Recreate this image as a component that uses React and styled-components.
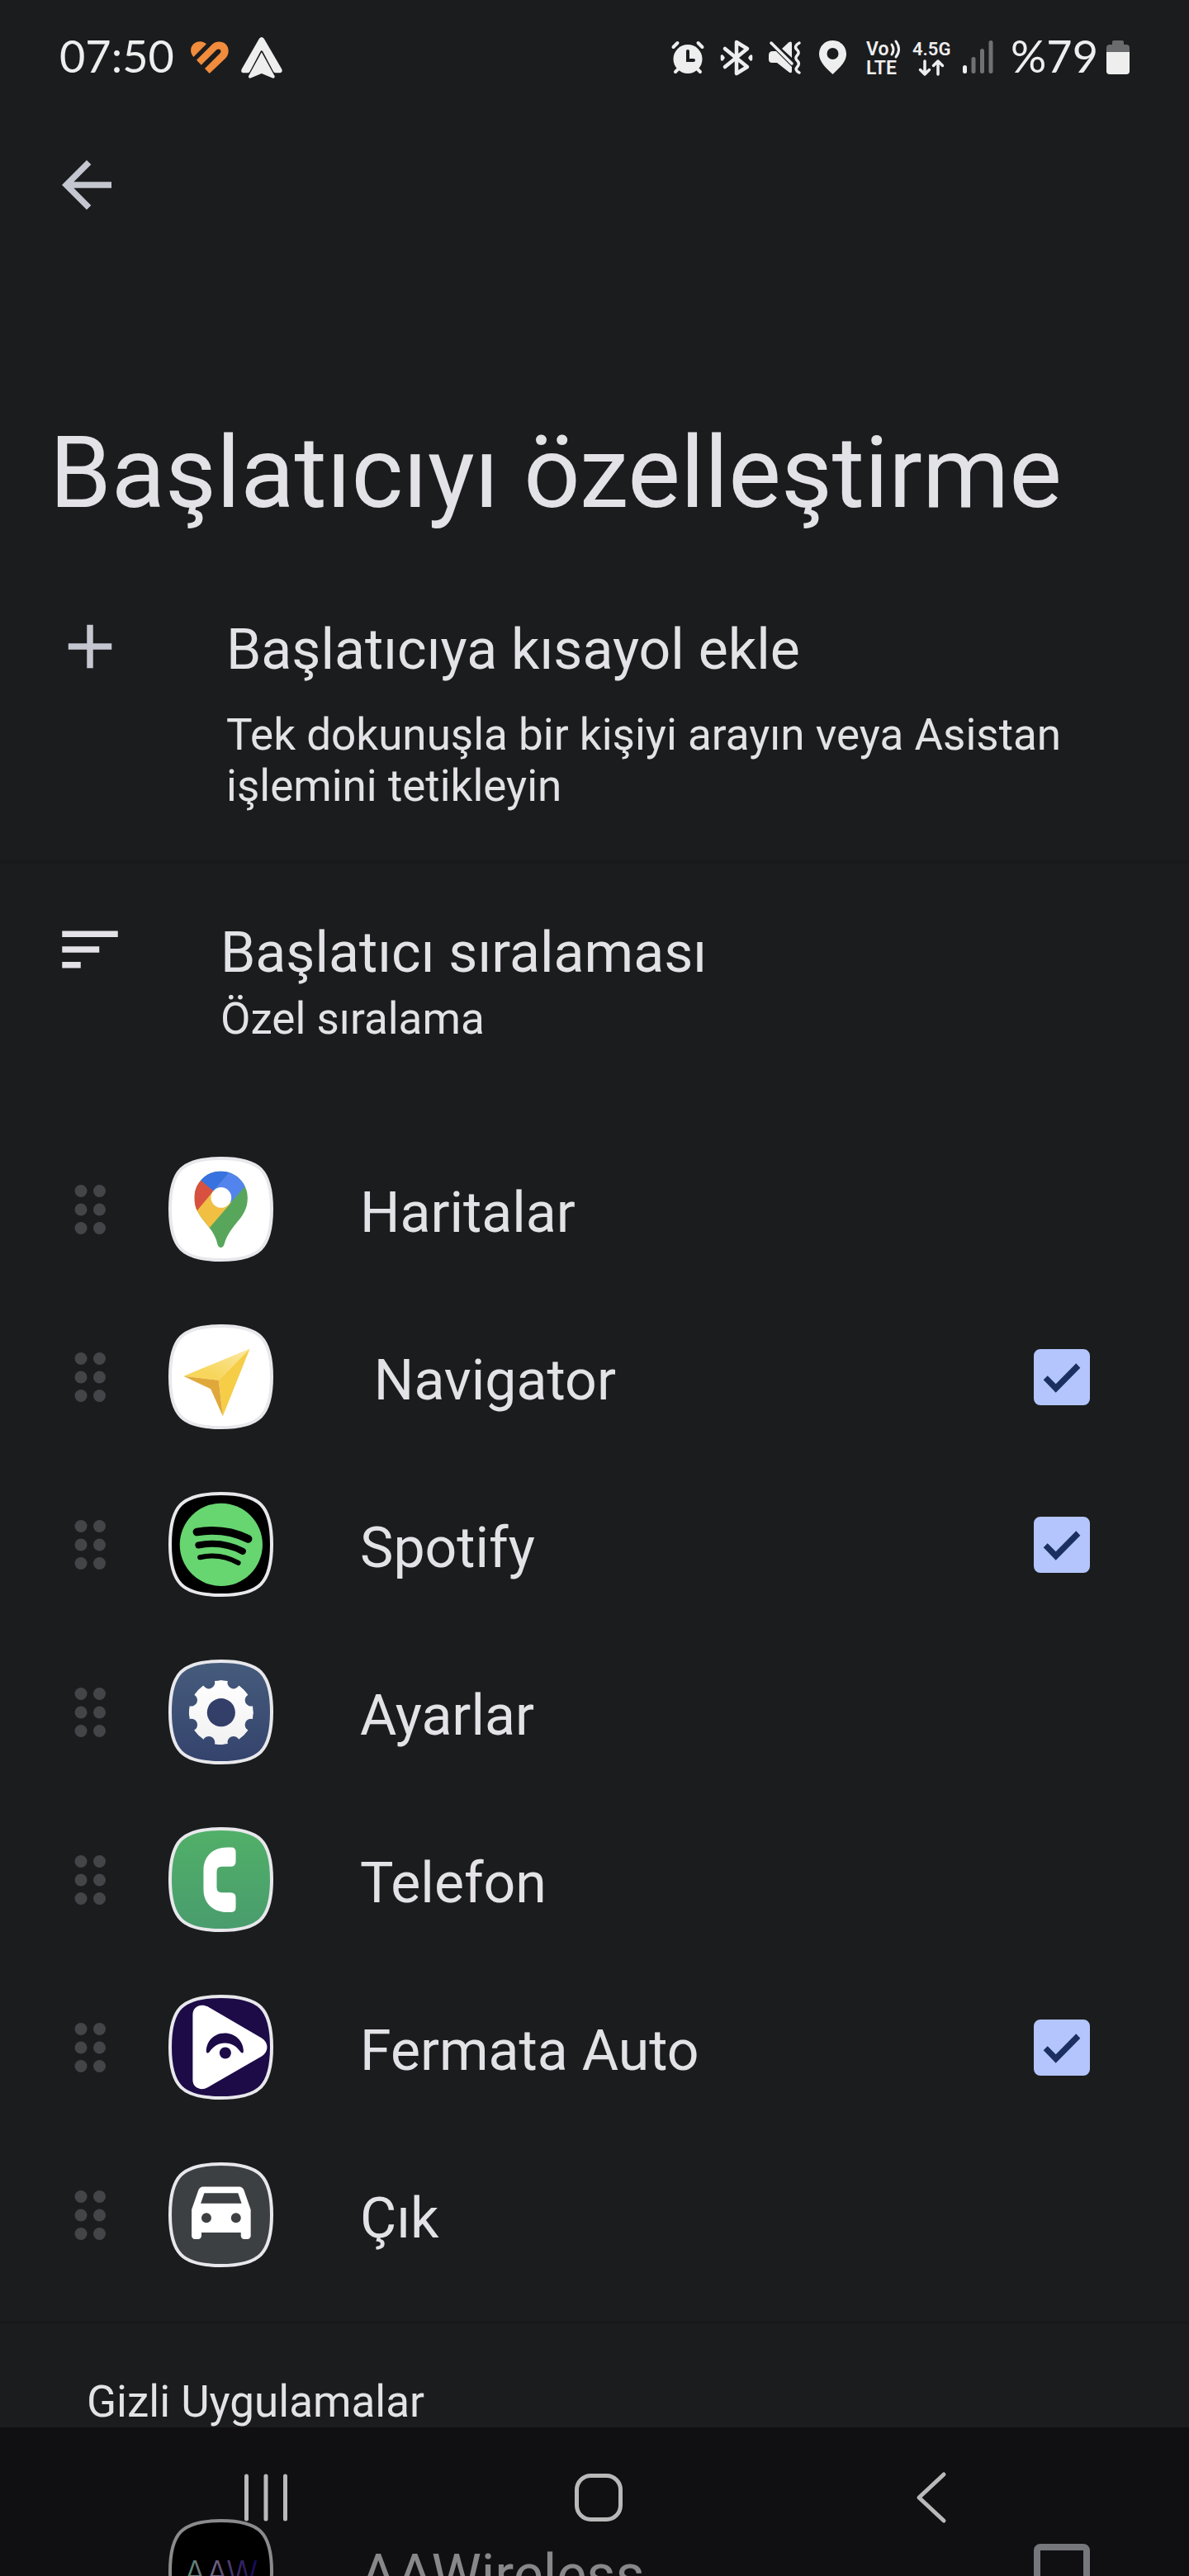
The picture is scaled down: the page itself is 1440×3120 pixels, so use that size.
import { useState } from "react";
import styled, { createGlobalStyle } from "styled-components";

const APPS = [
    { id: "maps", name: "Haritalar", Icon: MapsIcon },
    { id: "navigator", name: " Navigator", Icon: NavigatorIcon, optional: true },
    { id: "spotify", name: "Spotify", Icon: SpotifyIcon, optional: true },
    { id: "settings", name: "Ayarlar", Icon: SettingsIcon },
    { id: "phone", name: "Telefon", Icon: PhoneIcon },
    { id: "fermata", name: "Fermata Auto", Icon: FermataIcon, optional: true },
    { id: "exit", name: "Çık", Icon: CarIcon },
];

const HIDDEN_APPS = [
    { id: "aawireless", name: "AAWireless", Icon: AawIcon, optional: true },
];

const SQUIRCLE = "M190 6C330 6 374 50 374 190C374 330 330 374 190 374C50 374 6 330 6 190C6 50 50 6 190 6Z";

// every launcher icon sits in the same rounded shape with a light rim
function Badge({ fill, children }) {
    return (
        <BadgeSvg viewBox="0 0 380 380" aria-hidden="true">
            <path d={SQUIRCLE} fill={fill} />
            {children}
            <path d={SQUIRCLE} fill="none" stroke="#e8e8ec" strokeWidth="12" />
        </BadgeSvg>
    );
}

function MapsIcon() {
    return (
        <Badge fill="#fff">
            <clipPath id="pin">
                <path d="M190 52C243 52 287 95 287 149C287 225 222 243 202 318C199 327 195 329 190 329C184 329 181 326 178 318C163 245 94 225 94 149C94 95 137 52 190 52Z" />
            </clipPath>
            <g clipPath="url(#pin)">
                <path d="M60 30H320V340H60Z" fill="#58a65c" />
                <path d="M149 257L60 360V195L163 124L230 163Z" fill="#f1bf42" />
                <path d="M163 124L235 37L304 77L226 166L191 148Z" fill="#5383ec" />
                <path d="M163 124L118 87L100 40H233Z" fill="#3871e0" />
                <path d="M163 124L118 87L60 40V248Z" fill="#d85140" />
            </g>
            <circle cx="191" cy="148" r="37" fill="#fff" />
        </Badge>
    );
}

function NavigatorIcon() {
    return (
        <Badge fill="#fff">
            <linearGradient id="wing" x1="0" y1="1" x2="1" y2="0">
                <stop offset="0.3" stopColor="#f7d65b" />
                <stop offset="1" stopColor="#fae9a4" />
            </linearGradient>
            <path d="M295 88L55 188L182 203Z" fill="url(#wing)" />
            <path d="M295 88L182 203L197 333Z" fill="#f6cd46" />
            <path d="M55 188L182 203L197 333L153 234Z" fill="#e0a83a" />
        </Badge>
    );
}

function SpotifyIcon() {
    return (
        <Badge fill="#000">
            <circle cx="191" cy="191" r="150" fill="#67d570" />
            <g fill="none" stroke="#000" strokeLinecap="round">
                <path d="M103 145Q203 128 289 170" strokeWidth="29" />
                <path d="M109 193Q195 176 269 215" strokeWidth="24" />
                <path d="M114 237Q188 220 253 257" strokeWidth="18" />
            </g>
        </Badge>
    );
}

function SettingsIcon() {
    const notches = [0, 1, 2, 3, 4, 5, 6, 7].map((i) => 22.5 + i * 45);
    return (
        <Badge fill="url(#settingsBg)">
            <linearGradient id="settingsBg" x1="0" y1="0" x2="0" y2="1">
                <stop offset="0" stopColor="#465c7c" />
                <stop offset="1" stopColor="#34436d" />
            </linearGradient>
            <linearGradient id="gearFill" x1="0" y1="0" x2="0" y2="1">
                <stop offset="0" stopColor="#fff" />
                <stop offset="1" stopColor="#f1f1f2" />
            </linearGradient>
            <mask id="gear">
                <circle cx="191" cy="192" r="117" fill="#fff" />
                {notches.map((a) => (
                    <circle key={a} cx="308" cy="192" r="22" fill="#000" transform={`rotate(${a} 191 192)`} />
                ))}
            </mask>
            <circle cx="191" cy="192" r="117" fill="url(#gearFill)" mask="url(#gear)" />
            <circle cx="191" cy="192" r="51" fill="#333f69" />
        </Badge>
    );
}

function PhoneIcon() {
    return (
        <Badge fill="url(#phoneBg)">
            <linearGradient id="phoneBg" x1="0" y1="0" x2="0" y2="1">
                <stop offset="0" stopColor="#51b068" />
                <stop offset="1" stopColor="#499c6d" />
            </linearGradient>
            <path
                fill="#fff"
                d="M213 73H228Q244 73 244 90V124Q244 143 225 143H193Q175 143 175 162V218Q175 237 193 237H225Q244 237 244 256V291Q244 308 228 308H213C160 308 127 275 127 225V156C127 106 160 73 213 73Z"
            />
        </Badge>
    );
}

function FermataIcon() {
    return (
        <Badge fill="#1d0b48">
            <path d="M88 72C88 42 118 30 142 43L338 157C364 174 364 206 338 223L142 336C118 350 88 337 88 310Z" fill="#fff" />
            <g fill="#1d0b48">
                <path d="M137 205C137 168 165 139 204 139C243 139 272 168 272 205C272 212 266 213 262 208C248 188 230 175 204 175C180 175 162 188 148 208C144 213 137 212 137 205Z" />
                <circle cx="206" cy="211" r="21" />
            </g>
        </Badge>
    );
}

function CarIcon() {
    return (
        <Badge fill="#3d4043">
            <g transform="translate(48.3 28.5) scale(11.9)">
                <path
                    fill="#fff"
                    d="M18.92 6.01C18.72 5.42 18.16 5 17.5 5h-11c-.66 0-1.21.42-1.42 1.01L3 12v8c0 .55.45 1 1 1h1c.55 0 1-.45 1-1v-1h12v1c0 .55.45 1 1 1h1c.55 0 1-.45 1-1v-8l-2.08-5.99z"
                />
                <path d="M6.85 7h10.29l1.08 3.11H5.77L6.85 7z" fill="#3d4043" />
                <circle cx="7.5" cy="14.5" r="1.5" fill="#3d4043" />
                <circle cx="16.5" cy="14.5" r="1.5" fill="#3d4043" />
            </g>
        </Badge>
    );
}

function AawIcon() {
    return (
        <Badge fill="#000">
            <linearGradient id="aaw" x1="0" y1="0" x2="1" y2="0">
                <stop offset="0" stopColor="#9af0be" />
                <stop offset="0.4" stopColor="#c3a9e0" />
                <stop offset="0.7" stopColor="#6c4cb4" />
                <stop offset="1" stopColor="#220a9a" />
            </linearGradient>
            <text x="190" y="237" textAnchor="middle" fontFamily="Inter, sans-serif" fontSize="118" fontWeight="300" fill="url(#aaw)">
                AAW
            </text>
        </Badge>
    );
}

function HandleIcon() {
    const dots = [];
    for (const cy of [22.5, 45, 67.5]) {
        for (const cx of [34, 56.5]) {
            dots.push(<circle key={`${cx}-${cy}`} cx={cx} cy={cy} r="7.5" />);
        }
    }
    return (
        <LineIcon viewBox="0 0 90 90" fill="#444548" aria-hidden="true">
            {dots}
        </LineIcon>
    );
}

function AppRow({ app, sortable, checked, onToggle }) {
    const { id, name, Icon, optional } = app;
    return (
        <Row>
            <HandleSlot>{sortable && <HandleIcon />}</HandleSlot>
            <Icon />
            <RowName as={optional ? "label" : "span"} htmlFor={optional ? id : undefined}>
                {name}
            </RowName>
            {optional && (
                <CheckSlot>
                    <CheckInput id={id} type="checkbox" checked={checked} onChange={() => onToggle(id)} />
                    {checked && (
                        <CheckMark viewBox="0 0 68 68" aria-hidden="true">
                            <path d="M11.7 37.3L16.7 32.3L26.7 42.3L51.3 17.3L56.3 22.7L26.7 52.7Z" fill="#1b2f60" />
                        </CheckMark>
                    )}
                </CheckSlot>
            )}
        </Row>
    );
}

function StatusBar() {
    return (
        <Status>
            <StatusText>07:50</StatusText>
            <Notifications>
                <svg width="46" height="40" viewBox="0 0 138 120" fill="#f08c3c" aria-hidden="true">
                    <path d="M57 10L10 57C-3 43 -3 22 10 10C23 -2 43 -3 57 10Z" />
                    <path d="M21 68L77 12C98 -8 137 2 137 35C137 46 133 55 125 63L68 117L51 99L105 45C112 38 110 30 104 29C98 28 94 31 91 34L38 86Z" />
                </svg>
                <svg width="50" height="50" viewBox="0 0 147 148" fill="#eee" aria-hidden="true">
                    <path d="M73 0C77 0 80 3 82 6L145 114C149 122 145 128 138 128L122 128C119 128 117 126 115 123L77 51Q73 45 69 51L31 123C29 126 27 128 24 128L8 128C1 128 -2 122 2 114L64 6C66 3 69 0 73 0Z" />
                    <path d="M73 54L120 140Q121 148 114 147L73 130L32 147Q25 148 26 140Z" stroke="#1b1c1e" strokeWidth="5" paintOrder="stroke" />
                </svg>
            </Notifications>
            <SystemIcons>
                <svg width="40" height="44" viewBox="0 0 40 44" aria-hidden="true">
                    <g stroke="#eee" strokeWidth="4" strokeLinecap="round" fill="none">
                        <path d="M2.5 9L7.5 4M37.5 9L32.5 4M5 39L10 34M35 39L30 34" />
                    </g>
                    <circle cx="20" cy="23.5" r="17.5" fill="#eee" />
                    <path d="M20 14V25H27" fill="none" stroke="#1b1c1e" strokeWidth="4" strokeLinecap="round" />
                </svg>
                <svg width="40" height="44" viewBox="0 0 40 44" fill="none" stroke="#eee" strokeWidth="4.5" strokeLinejoin="round" strokeLinecap="round" aria-hidden="true">
                    <path d="M6 11L33 33L20 41V3L33 11L6 33" />
                    <path d="M2.5 20V24L4 22ZM37.5 20V24L36 22Z" strokeWidth="3.5" />
                </svg>
                <svg width="40" height="44" viewBox="0 0 40 44" fill="#eee" aria-hidden="true">
                    <path d="M0 19Q0 14 5 14H9L28 33V38Q28 42 24 39L10 28H4Q0 28 0 24Z" />
                    <path d="M16 11L24 3.5Q28 1 28 5V22Z" />
                    <g fill="none" stroke="#eee" strokeWidth="3.5" strokeLinecap="round">
                        <path d="M3 4L28 29" />
                        <path d="M37 4Q30 8 34 12Q38 15.500 34.500 19Q31 22.500 35 26Q38 29.500 34.500 33Q31 37 37 40" />
                    </g>
                </svg>
                <svg width="40" height="44" viewBox="0 0 40 44" fill="#eee" aria-hidden="true">
                    <path fillRule="evenodd" d="M18.5 1C28.5 1 35 8.5 35 17.5C35 27 26 35 18.5 42C11 35 2 27 2 17.5C2 8.5 8.5 1 18.5 1ZM18.5 10A7 7 0 1 0 18.5 24A7 7 0 1 0 18.5 10Z" />
                </svg>
            </SystemIcons>
            <NetworkIcons>
                <svg width="42" height="44" viewBox="0 0 42 44" fill="#eee" aria-hidden="true">
                    <text x="0" y="19" fontSize="23" fontWeight="600">Vo</text>
                    <text x="0" y="42" fontSize="23" fontWeight="600">LTE</text>
                    <path d="M31 6Q35 12 31 18M36 2Q43 12 36 21" fill="none" stroke="#eee" strokeWidth="3" strokeLinecap="round" />
                </svg>
                <svg width="46" height="44" viewBox="0 0 46 44" fill="#eee" aria-hidden="true">
                    <text x="0" y="19" fontSize="22" fontWeight="600">4.5G</text>
                    <path d="M15 26V42M9.5 36.5L15 42L20.5 36.5M31 42V26M25.5 31.5L31 26L36.5 31.5" fill="none" stroke="#eee" strokeWidth="3.5" strokeLinecap="round" strokeLinejoin="round" />
                </svg>
                <svg width="38" height="44" viewBox="0 0 38 44" fill="#707173" aria-hidden="true">
                    <rect x="1" y="31" width="5" height="10" rx="2.5" fill="#eee" />
                    <rect x="11.5" y="21" width="5" height="20" rx="2.5" />
                    <rect x="22" y="11" width="5" height="30" rx="2.5" />
                    <rect x="32.5" y="1" width="5" height="40" rx="2.5" />
                </svg>
            </NetworkIcons>
            <StatusText>%79</StatusText>
            <svg width="28" height="44" viewBox="0 0 28 44" aria-hidden="true">
                <path d="M7 6V3Q7 1 9 1H19Q21 1 21 3V6H24Q28 6 28 10V15H0V10Q0 6 4 6Z" fill="#6a6b6d" />
                <path d="M0 15H28V38Q28 42 24 42H4Q0 42 0 38Z" fill="#eee" />
            </svg>
        </Status>
    );
}

function App() {
    const [enabled, setEnabled] = useState({ navigator: true, spotify: true, fermata: true });

    const toggle = (id) => {
        setEnabled({ ...enabled, [id]: !enabled[id] });
    };

    return (
        <Screen>
            <GlobalStyle />
            <StatusBar />
            <Toolbar>
                <IconButton aria-label="Geri">
                    <LineIcon viewBox="0 0 24 24" fill="#c4c6d0" aria-hidden="true">
                        <path d="M20 11H7.83l5.59-5.59L12 4l-8 8 8 8 1.41-1.41L7.83 13H20v-2z" />
                    </LineIcon>
                </IconButton>
            </Toolbar>
            <Title>Başlatıcıyı özelleştirme</Title>

            <Action $gap={120}>
                <LineIcon viewBox="0 0 24 24" fill="#c4c6d0" aria-hidden="true">
                    <path d="M19 13h-6v6h-2v-6H5v-2h6V5h2v6h6v2z" />
                </LineIcon>
                <ActionText $gap={32}>
                    <ItemTitle>Başlatıcıya kısayol ekle</ItemTitle>
                    <ItemNote>Tek dokunuşla bir kişiyi arayın veya Asistan işlemini tetikleyin</ItemNote>
                </ActionText>
            </Action>
            <Divider $top={59} $bottom={59} />
            <Action $gap={113}>
                <LineIcon viewBox="0 0 24 24" fill="#e3e2e6" aria-hidden="true">
                    <path d="M3 18h6v-2H3v2zM3 6v2h18V6H3zm0 7h12v-2H3v2z" />
                </LineIcon>
                <ActionText $gap={9}>
                    <ItemTitle>Başlatıcı sıralaması</ItemTitle>
                    <ItemNote>Özel sıralama</ItemNote>
                </ActionText>
            </Action>

            <AppList>
                {APPS.map((app) => (
                    <AppRow key={app.id} app={app} sortable checked={!!enabled[app.id]} onToggle={toggle} />
                ))}
            </AppList>
            <Divider $top={27} $bottom={63} />
            <SectionName>Gizli Uygulamalar</SectionName>
            <HiddenList>
                {HIDDEN_APPS.map((app) => (
                    <AppRow key={app.id} app={app} checked={!!enabled[app.id]} onToggle={toggle} />
                ))}
            </HiddenList>

            <NavBar>
                <NavButton aria-label="Son uygulamalar">
                    <NavIcon viewBox="0 0 62 62" aria-hidden="true">
                        <path d="M7.5 5V57M31 5V57M54.5 5V57" />
                    </NavIcon>
                </NavButton>
                <NavButton aria-label="Ana ekran">
                    <NavIcon viewBox="0 0 62 62" aria-hidden="true">
                        <rect x="4.5" y="4.5" width="53" height="53" rx="17" />
                    </NavIcon>
                </NavButton>
                <NavButton aria-label="Geri">
                    <NavIcon viewBox="0 0 62 62" aria-hidden="true">
                        <path d="M46 3L16 31L46 59" />
                    </NavIcon>
                </NavButton>
            </NavBar>
        </Screen>
    );
}

const GlobalStyle = createGlobalStyle`
    body {
        margin: 0;
        background: #1b1c1e;
        font-family: Roboto, "Noto Sans", sans-serif;
        color: #e3e2e6;
    }

    svg {
        flex: none;
        display: block;
        overflow: visible;
    }
`;

const Screen = styled.div`
    box-sizing: border-box;
    height: 100vh;
    overflow-y: auto;
    scrollbar-width: none;
`;

const Status = styled.header`
    display: flex;
    align-items: center;
    height: 140px;
    padding: 0 72px;
`;

const StatusText = styled.span`
    padding-bottom: 4px;
    font-family: Lato, Roboto, sans-serif;
    font-size: 54px;
    line-height: 64px;
    color: #eee;
`;

const Notifications = styled.div`
    display: flex;
    align-items: center;
    gap: 15px;
    flex: 1;
    padding-left: 20px;
`;

const SystemIcons = styled.div`
    display: flex;
    gap: 19px;
    padding-right: 19px;
`;

const NetworkIcons = styled.div`
    display: flex;
    gap: 14px;
    padding-right: 21px;

    & + ${StatusText} {
        padding-right: 10px;
    }
`;

const Toolbar = styled.nav`
    display: flex;
    align-items: center;
    height: 168px;
    padding: 0 60px;
`;

const IconButton = styled.button`
    padding: 0;
    border: none;
    background: none;
    cursor: pointer;
`;

const LineIcon = styled.svg`
    width: 90px;
    height: 90px;
`;

const BadgeSvg = styled.svg`
    width: 127px;
    height: 127px;
`;

const Title = styled.h1`
    margin: 0;
    padding: 195px 60px 95px;
    font-size: 120px;
    line-height: 140px;
    font-weight: 400;
`;

const Action = styled.section`
    display: flex;
    align-items: flex-start;
    gap: ${(props) => props.$gap}px;
    padding: 0 64px;
`;

const ActionText = styled.div`
    display: flex;
    flex-direction: column;
    gap: ${(props) => props.$gap}px;
    padding-top: 9px;
`;

const ItemTitle = styled.h2`
    margin: 0;
    font-size: 68px;
    line-height: 80px;
    font-weight: 400;
`;

const ItemNote = styled.p`
    margin: 0;
    font-size: 53px;
    line-height: 62px;
`;

const Divider = styled.hr`
    height: 4px;
    margin: ${(props) => props.$top}px 0 ${(props) => props.$bottom}px;
    border: none;
    background: #18191b;
`;

const AppList = styled.ul`
    margin: 0;
    padding: 98px 0 0;
    list-style: none;
`;

const HiddenList = styled(AppList)`
    padding-top: 73px;
`;

const Row = styled.li`
    display: flex;
    align-items: center;
    height: 203px;
    padding: 0 120px 0 64px;
`;

const HandleSlot = styled.span`
    flex: none;
    width: 140px;
`;

const RowName = styled.span`
    flex: 1;
    padding: 8px 0 0 105px;
    font-size: 68px;
    line-height: 80px;
    white-space: pre;
`;

const CheckSlot = styled.span`
    display: grid;
    width: 68px;
    height: 68px;

    & > * {
        grid-area: 1 / 1;
    }
`;

const CheckInput = styled.input`
    appearance: none;
    box-sizing: border-box;
    width: 68px;
    height: 68px;
    margin: 0;
    border: 8px solid #c4c6d0;
    border-radius: 8px;
    cursor: pointer;

    &:checked {
        border-color: #b3c5fc;
        background: #b3c5fc;
    }
`;

const CheckMark = styled.svg`
    width: 68px;
    height: 68px;
    pointer-events: none;
`;

const SectionName = styled.h3`
    margin: 0;
    padding: 0 105px;
    font-size: 53px;
    line-height: 62px;
    font-weight: 400;
`;

const NavBar = styled.nav`
    position: fixed;
    left: 0;
    right: 0;
    bottom: 0;
    box-sizing: border-box;
    display: flex;
    align-items: center;
    height: 180px;
    padding: 0 110px 10px 120px;
    background: rgba(0, 0, 0, 0.4);
`;

const NavButton = styled.button`
    flex: 1;
    display: flex;
    justify-content: center;
    padding: 0;
    border: none;
    background: none;
    cursor: pointer;
`;

const NavIcon = styled.svg`
    width: 62px;
    height: 62px;
    fill: none;
    stroke: #b9b9b9;
    stroke-width: 5px;
    stroke-linecap: round;
    stroke-linejoin: round;
`;

export default App;
